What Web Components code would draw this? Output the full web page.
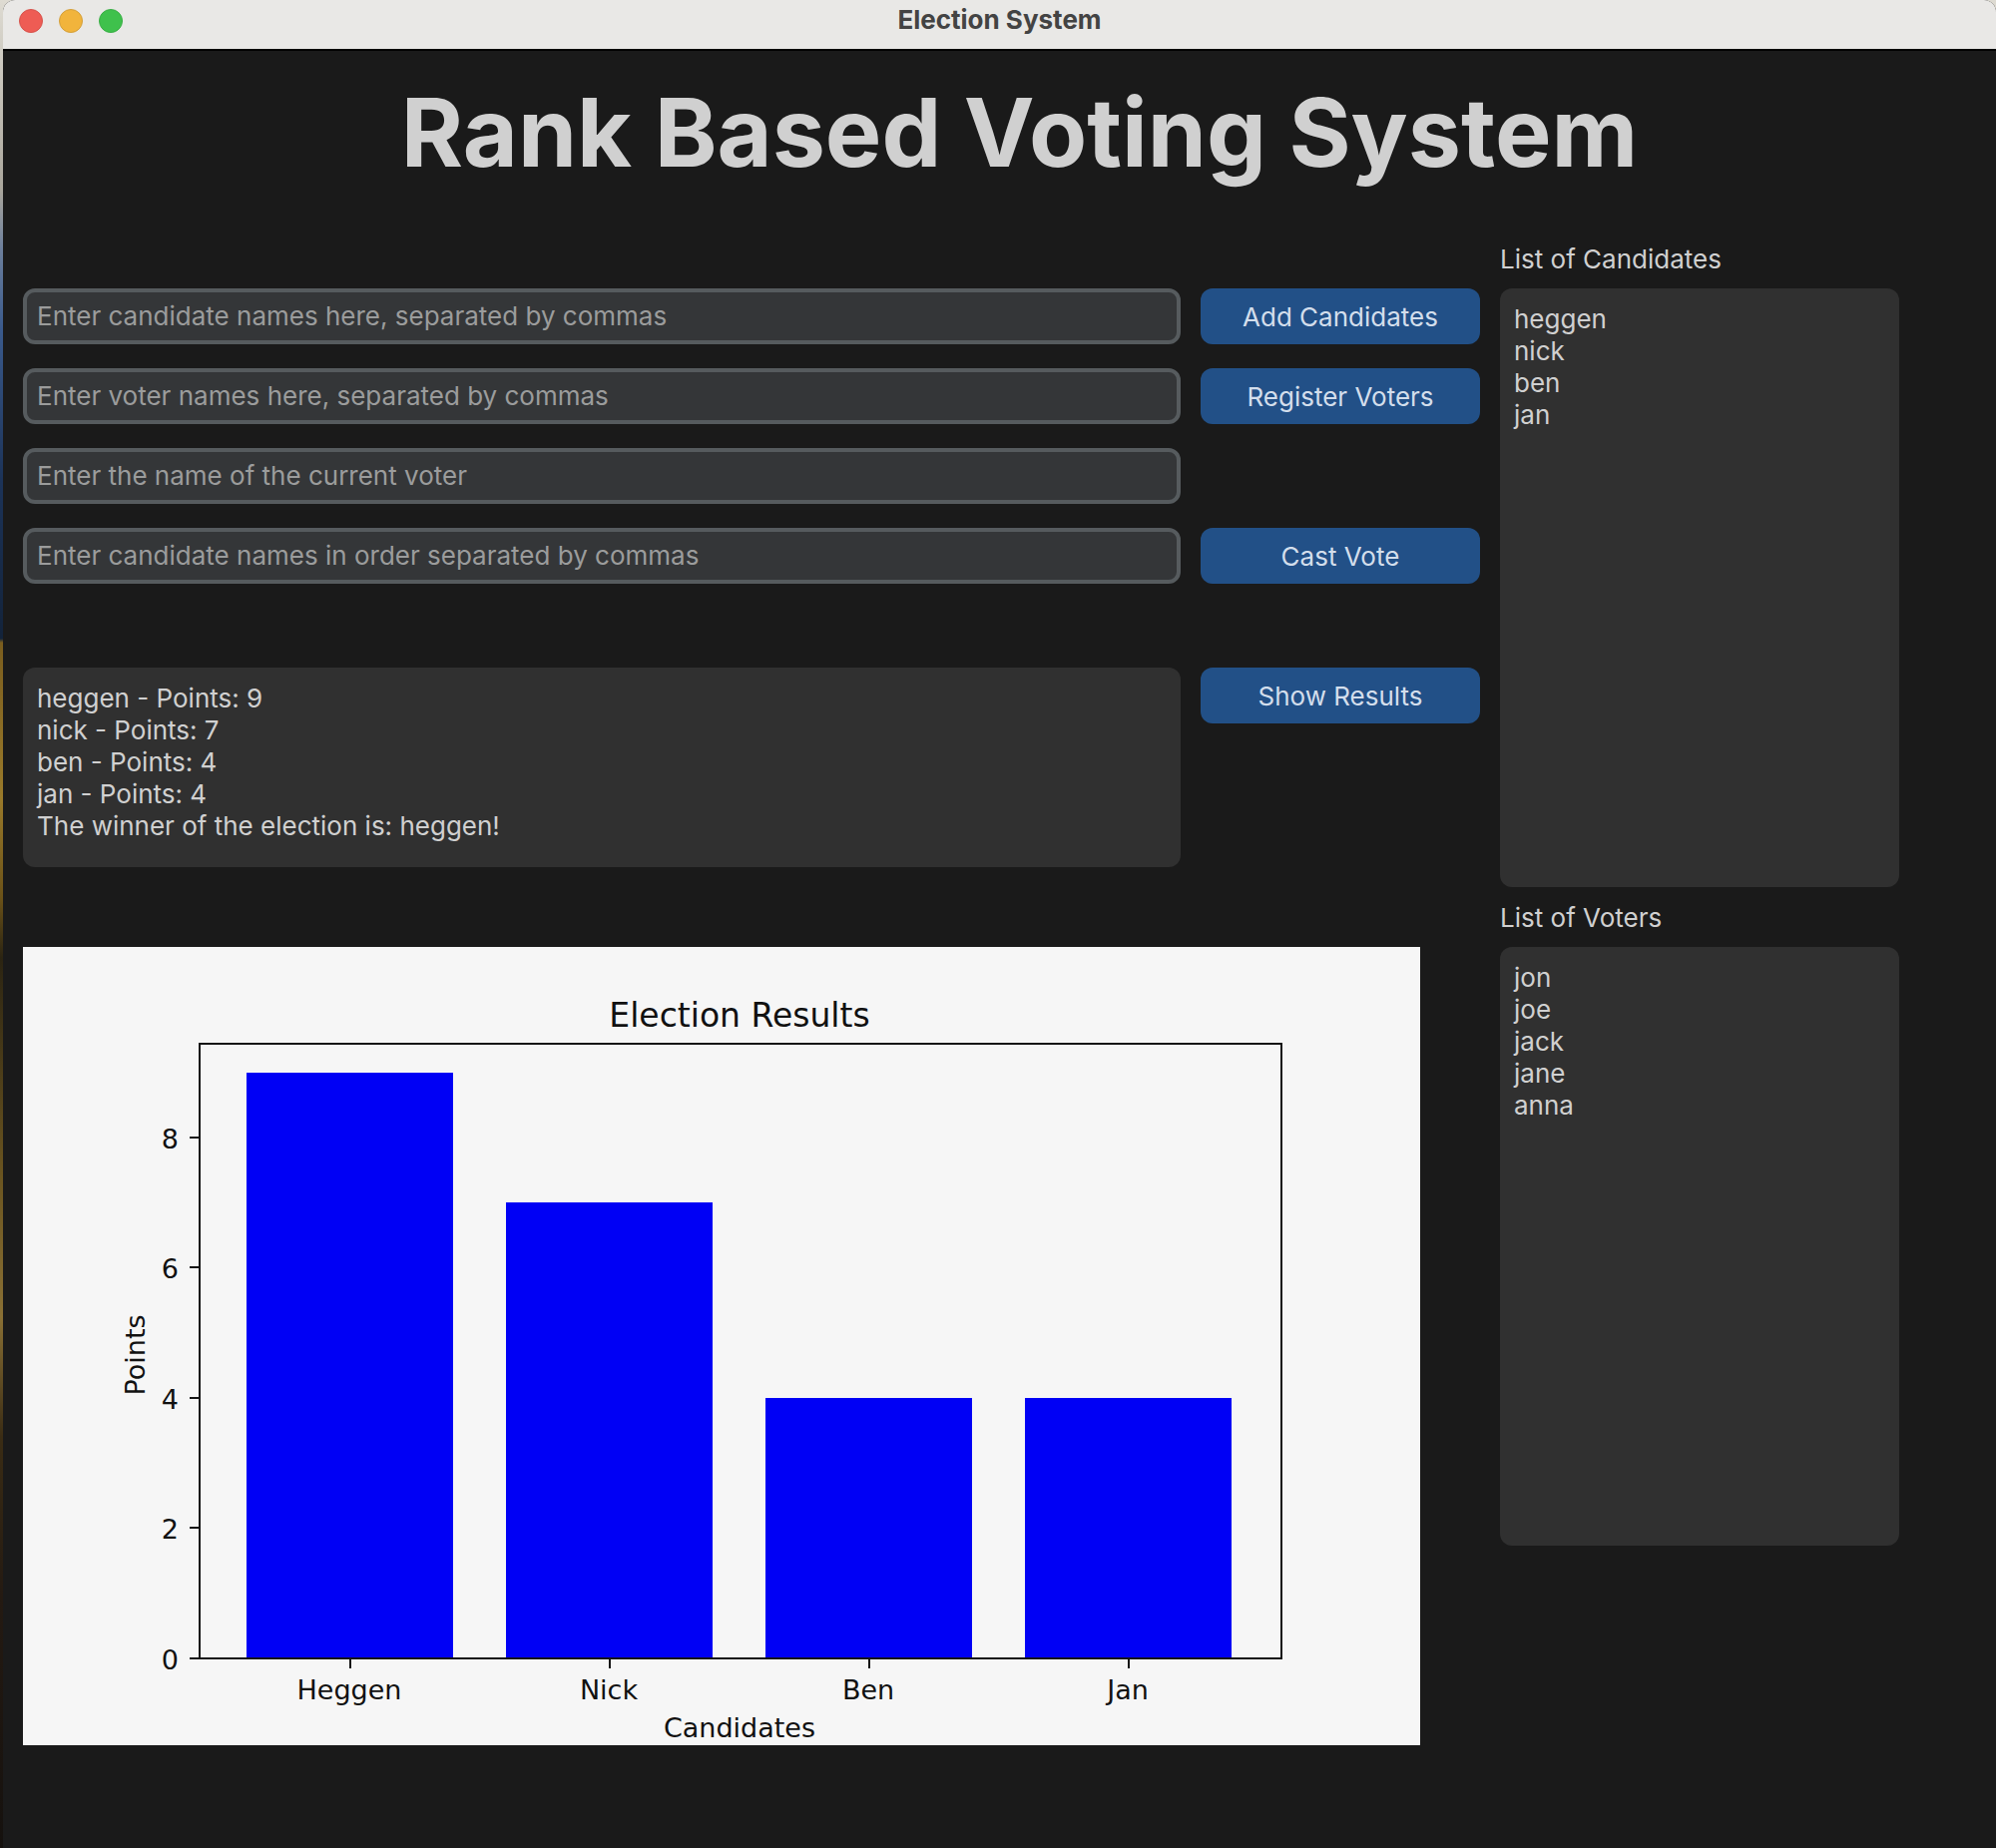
<!DOCTYPE html>
<html lang="en">
<head>
<meta charset="utf-8">
<title>Election System</title>
<style>
  html { height: 100%; }
  body {
    margin: 0;
    min-height: 100%;
    display: flex;
    font-family: Inter, "Liberation Sans", sans-serif;
    font-size: 26px;
    color: #d0d0d0;
    background: linear-gradient(#dedbd2 0, #aaa69c 190px, #6c7f9c 250px, #3a5a8c 330px, #1c3358 480px, #13233a 640px, #7a5d1e 644px, #9a7a2a 800px, #6b5218 900px, #2b2412 960px, #6b5520 1180px, #8a7034 1320px, #3a2c14 1440px, #241a12 1600px, #15110e 100%);
  }
  app-window { flex: 1; margin-left: 3px; }
</style>
</head>
<body>
<app-window heading="Election System">
  <election-app></election-app>
</app-window>

<script>
const define = (name, html, setup) => {
  const template = document.createElement('template');
  template.innerHTML = html;
  customElements.define(name, class extends HTMLElement {
    constructor() {
      super();
      this.attachShadow({ mode: 'open' }).append(template.content.cloneNode(true));
    }
    connectedCallback() {
      if (setup && !this.ready) { this.ready = true; setup(this, this.shadowRoot); }
    }
  });
};

define('app-window', `
  <style>
    :host { display: flex; flex-direction: column; box-sizing: border-box; min-width: 0; background: #1a1a1a; border-radius: 12px 12px 0 0; overflow: hidden; }
    header { display: grid; grid-template-columns: 1fr auto 1fr; align-items: start; height: 49px; background: #e9e8e6; border-bottom: 2px solid #000; }
    .lights { display: flex; gap: 16px; padding: 9px 0 0 16px; }
    .lights button { width: 24px; height: 24px; padding: 0; border: 1px solid var(--rim); border-radius: 50%; }
    .close { background: #ee5c54; --rim: #d6524b; }
    .min { background: #f1b43c; --rim: #d39f3a; }
    .max { background: #3fc14c; --rim: #3aae45; }
    .name { font-size: 26px; line-height: 40px; font-weight: 700; color: #434343; }
  </style>
  <header>
    <div class="lights">
      <button class="close" aria-label="Close"></button>
      <button class="min" aria-label="Minimize"></button>
      <button class="max" aria-label="Zoom"></button>
    </div>
    <div class="name"></div>
  </header>
  <slot></slot>
`, (host, root) => { root.querySelector('.name').textContent = host.getAttribute('heading'); });

define('text-entry', `
  <style>
    :host { display: block; }
    input { display: block; box-sizing: border-box; width: 100%; height: 56px; padding: 0 10px 2px; border: 4px solid #565b5e; border-radius: 12px; background: #343638; color: #dce4ee; font: inherit; outline: none; }
    input::placeholder { color: #9b9c9c; opacity: 1; }
  </style>
  <input type="text">
`, (host, root) => {
  const input = root.querySelector('input');
  input.placeholder = host.getAttribute('hint');
  input.setAttribute('aria-label', host.getAttribute('hint'));
});

define('action-button', `
  <style>
    :host { display: block; }
    button { display: block; width: 100%; height: 56px; padding: 0; border: 0; border-radius: 12px; background: #225087; color: #d3deec; font: inherit; }
  </style>
  <button type="button"><slot></slot></button>
`);

define('text-panel', `
  <style>
    :host { display: block; --height: 600px; }
    label { display: block; padding-top: 2px; line-height: 58px; }
    label[hidden] { display: none; }
    textarea { display: block; box-sizing: border-box; width: 100%; height: var(--height); padding: 15px 14px; border: 0; border-radius: 12px; background: #303030; color: inherit; font: inherit; line-height: 32px; resize: none; outline: none; overflow: hidden; }
  </style>
  <label for="box"></label>
  <textarea id="box" readonly></textarea>
`, (host, root) => {
  const label = root.querySelector('label');
  const box = root.querySelector('textarea');
  if (host.hasAttribute('heading')) label.textContent = host.getAttribute('heading');
  else { label.hidden = true; box.setAttribute('aria-label', host.getAttribute('name')); }
  box.value = host.getAttribute('lines').split('|').join('\n');
});

define('bar-chart', `
  <style>
    :host { display: block; background: #f6f6f6; }
    svg { display: block; width: 100%; height: auto; font-family: "DejaVu Sans", sans-serif; font-size: 27px; fill: #111; }
    .title { font-size: 33px; }
    .bar { fill: #0000f5; }
    .axis { fill: none; stroke: #151515; stroke-width: 2; }
    .mid { text-anchor: middle; }
    .end { text-anchor: end; }
  </style>
  <svg viewBox="0 0 1400 800" role="img" aria-label="Election Results"></svg>
`, (host, root) => {
  const items = host.getAttribute('data').split(',').map(s => s.split(':'));
  const base = 713, y = v => Math.floor(base - v * 65.2);
  let out = '<text class="title mid" x="718" y="80">Election Results</text>';
  let axis = 'M177 97H1261V713H177Z';
  items.forEach(([name, value], i) => {
    const x = 224 + i * 260;
    out += `<rect class="bar" x="${x}" y="${y(value)}" width="207" height="${base - y(value)}"/>`;
    out += `<text class="mid" x="${x + 103}" y="754">${name}</text>`;
    axis += `M${x + 104} 713v10`;
  });
  [0, 2, 4, 6, 8].forEach(v => {
    out += `<text class="end" x="156" y="${y(v) + 11}">${v}</text>`;
    axis += `M167 ${y(v)}h10`;
  });
  out += `<path class="axis" d="${axis}"/>`;
  out += '<text class="mid" x="718" y="792">Candidates</text>';
  out += '<text class="mid" transform="translate(122 409) rotate(-90)">Points</text>';
  root.querySelector('svg').innerHTML = out;
});

define('election-app', `
  <style>
    :host { display: block; padding-bottom: 103px; }
    h1 { margin: 0; padding: 22px 0 36px 40px; font-size: 95px; line-height: 120px; font-weight: 700; text-align: center; }
    main { display: flex; align-items: flex-start; gap: 20px; padding: 0 97px 0 20px; }
    .work { flex: 1; min-width: 0; padding-top: 60px; }
    .grid { display: grid; grid-template-columns: minmax(0, 1fr) 280px; gap: 24px 20px; }
    .grid > text-entry { grid-column: 1; }
    .results { margin: 84px 0 80px; }
    .results text-panel { --height: 200px; }
    bar-chart { margin-right: 60px; }
    aside { width: 400px; }
  </style>
  <h1>Rank Based Voting System</h1>
  <main>
    <div class="work">
      <div class="grid">
        <text-entry hint="Enter candidate names here, separated by commas"></text-entry>
        <action-button>Add Candidates</action-button>
        <text-entry hint="Enter voter names here, separated by commas"></text-entry>
        <action-button>Register Voters</action-button>
        <text-entry hint="Enter the name of the current voter"></text-entry>
        <text-entry hint="Enter candidate names in order separated by commas"></text-entry>
        <action-button>Cast Vote</action-button>
      </div>
      <div class="grid results">
        <text-panel name="Results" lines="heggen - Points: 9|nick - Points: 7|ben - Points: 4|jan - Points: 4|The winner of the election is: heggen!"></text-panel>
        <action-button>Show Results</action-button>
      </div>
      <bar-chart data="Heggen:9,Nick:7,Ben:4,Jan:4"></bar-chart>
    </div>
    <aside>
      <text-panel heading="List of Candidates" lines="heggen|nick|ben|jan"></text-panel>
      <text-panel heading="List of Voters" lines="jon|joe|jack|jane|anna"></text-panel>
    </aside>
  </main>
`);
</script>
</body>
</html>
